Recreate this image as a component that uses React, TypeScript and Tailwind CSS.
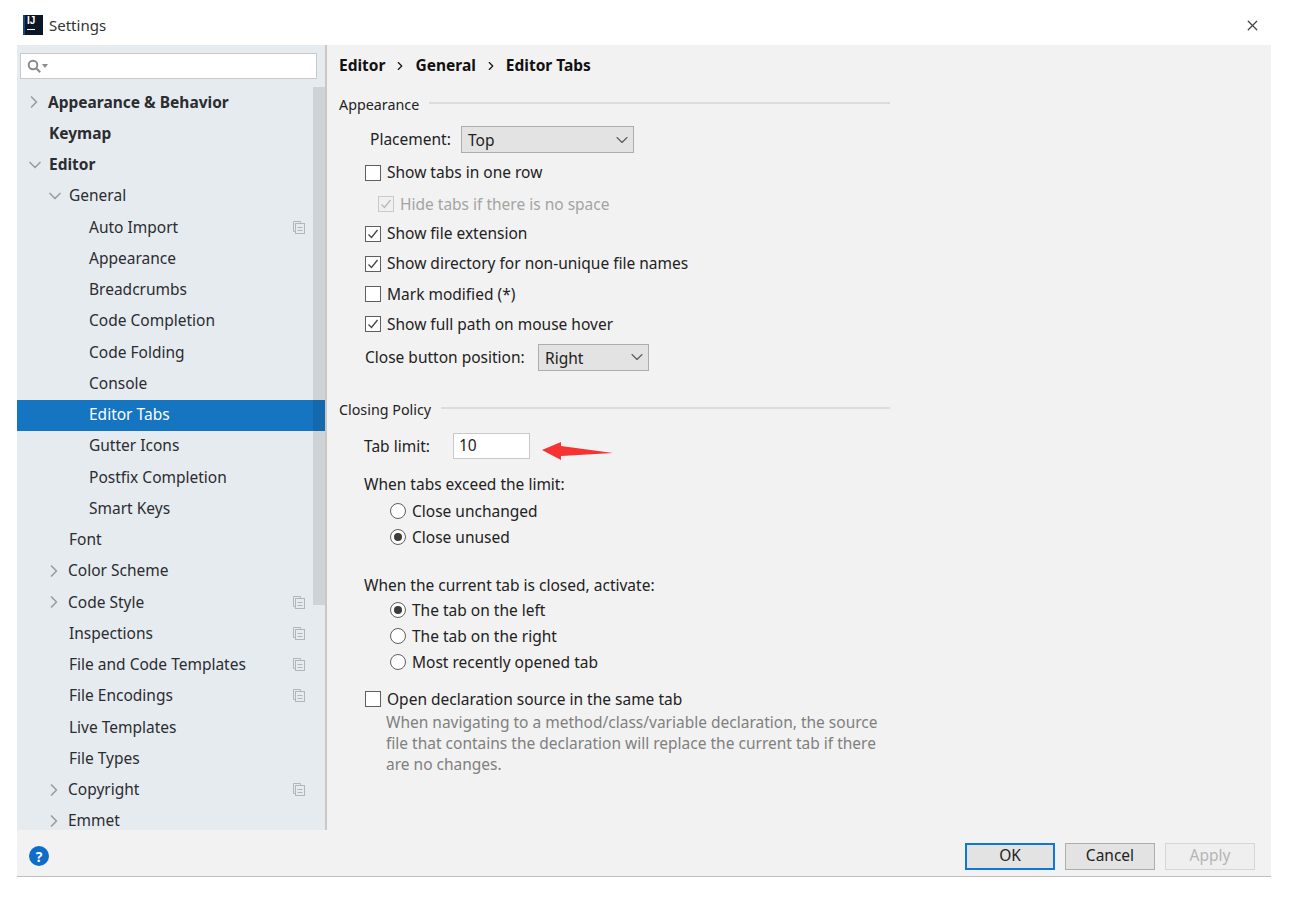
import { ChevronDown, ChevronRight, X } from 'lucide-react';

type TreeItem = {
  label: string;
  pad: string;
  bold?: boolean;
  arrow?: 'right' | 'down';
  shared?: boolean;
  selected?: boolean;
};

const treeItems: TreeItem[] = [
  { label: 'Appearance & Behavior', pad: 'pl-[10px]', bold: true, arrow: 'right' },
  { label: 'Keymap', pad: 'pl-[32px]', bold: true },
  { label: 'Editor', pad: 'pl-[11px]', bold: true, arrow: 'down' },
  { label: 'General', pad: 'pl-[31px]', arrow: 'down' },
  { label: 'Auto Import', pad: 'pl-[72px]', shared: true },
  { label: 'Appearance', pad: 'pl-[72px]' },
  { label: 'Breadcrumbs', pad: 'pl-[72px]' },
  { label: 'Code Completion', pad: 'pl-[72px]' },
  { label: 'Code Folding', pad: 'pl-[72px]' },
  { label: 'Console', pad: 'pl-[72px]' },
  { label: 'Editor Tabs', pad: 'pl-[72px]', selected: true },
  { label: 'Gutter Icons', pad: 'pl-[72px]' },
  { label: 'Postfix Completion', pad: 'pl-[72px]' },
  { label: 'Smart Keys', pad: 'pl-[72px]' },
  { label: 'Font', pad: 'pl-[52px]' },
  { label: 'Color Scheme', pad: 'pl-[30px]', arrow: 'right' },
  { label: 'Code Style', pad: 'pl-[30px]', arrow: 'right', shared: true },
  { label: 'Inspections', pad: 'pl-[52px]', shared: true },
  { label: 'File and Code Templates', pad: 'pl-[52px]', shared: true },
  { label: 'File Encodings', pad: 'pl-[52px]', shared: true },
  { label: 'Live Templates', pad: 'pl-[52px]' },
  { label: 'File Types', pad: 'pl-[52px]' },
  { label: 'Copyright', pad: 'pl-[30px]', arrow: 'right', shared: true },
  { label: 'Emmet', pad: 'pl-[30px]', arrow: 'right' },
];

const SharedIcon = () => (
  <svg width="12" height="13" viewBox="0 0 12 13" fill="none" stroke="#b0b6bc" strokeWidth="1">
    <path d="M2.5 10.5h-2v-10h7v2" />
    <rect x="2.5" y="2.5" width="9" height="10" />
    <path d="M4.5 6.5h5M4.5 9.5h5" />
  </svg>
);

const TreeRow = ({ item }: { item: TreeItem }) => (
  <div
    className={`flex items-center h-[31.25px] pb-[1px] pr-[20px] shrink-0 ${item.pad} ${
      item.selected ? 'bg-[#1675c0] text-white' : 'text-[#2b2d30]'
    } ${item.bold ? 'font-bold' : ''}`}
  >
    {item.arrow === 'right' && <ChevronRight className="w-[20px] h-[20px] -ml-[3.5px] mr-[4.5px] text-[#9a9da0]" strokeWidth={2} />}
    {item.arrow === 'down' && <ChevronDown className="w-[20px] h-[20px] -ml-[3.5px] mr-[4.5px] text-[#9a9da0]" strokeWidth={2} />}
    <span className="flex-1 whitespace-nowrap">{item.label}</span>
    {item.shared && <SharedIcon />}
  </div>
);

const Checkbox = ({ label, checked, disabled }: { label: string; checked?: boolean; disabled?: boolean }) => (
  <div className={`flex items-center gap-[6px] ${disabled ? 'text-[#a4a4a4]' : ''}`}>
    <span
      className={`w-[16px] h-[16px] border flex items-center justify-center shrink-0 ${
        disabled ? 'border-[#c9c9c9] bg-[#f0f0f0]' : 'border-[#5f5f5f] bg-white'
      }`}
    >
      {checked && (
        <svg width="12" height="12" viewBox="0 0 12 12" fill="none" stroke={disabled ? '#b8b8b8' : '#444444'} strokeWidth="1.3">
          <path d="M1.5 6.5l3 3 6-7.5" />
        </svg>
      )}
    </span>
    <span className="whitespace-nowrap">{label}</span>
  </div>
);

const Radio = ({ label, checked }: { label: string; checked?: boolean }) => (
  <div className="flex items-center gap-[6px] h-[26px]">
    <span className="w-[16px] h-[16px] rounded-full border border-[#5f5f5f] bg-white flex items-center justify-center shrink-0">
      {checked && <span className="w-[8px] h-[8px] rounded-full bg-[#3c3c3c]" />}
    </span>
    <span className="whitespace-nowrap">{label}</span>
  </div>
);

const Select = ({ value, width }: { value: string; width: string }) => (
  <div className={`flex items-center justify-between h-[27px] pl-[6px] pr-[1px] border border-[#adadad] bg-[#e3e3e3] ${width}`}>
    <span className="mt-[2px]">{value}</span>
    <ChevronDown className="w-[20px] h-[20px] text-[#5a5a5a]" strokeWidth={1.3} />
  </div>
);

const GroupTitle = ({ title }: { title: string }) => (
  <div className="flex items-center gap-[10px] w-[551px] h-[20px] text-[14.3px]">
    <span className="whitespace-nowrap mt-[1px]">{title}</span>
    <span className="flex-1 h-[2px] mb-[2px] bg-[#dcdcdc]" />
  </div>
);

const DialogButton = ({ label, kind }: { label: string; kind: 'default' | 'normal' | 'disabled' }) => {
  const styles = {
    default: 'border-2 border-[#0f78d4] bg-[#e3e3e3] text-[#222222]',
    normal: 'border border-[#adadad] bg-[#e3e3e3] text-[#222222]',
    disabled: 'border border-[#d6d6d6] bg-[#efefef] text-[#b5b5b5]',
  };
  return <div className={`w-[90px] h-[27px] flex items-center justify-center ${styles[kind]}`}>{label}</div>;
};

export default function App() {
  return (
    <div className="w-[1301px] h-[898px] bg-white flex flex-col font-['Noto_Sans',sans-serif] text-[15.5px] text-[#222222] overflow-hidden">
      {/* Title bar */}
      <div className="h-[45px] pt-[5px] shrink-0 flex items-center pl-[23px] pr-[40px]">
        <div className="w-[20px] h-[20px] bg-[#0b1626] border-l-2 border-[#15467e] flex flex-col px-[2px] pt-[1px] text-white">
          <span className="text-[10px] leading-[10px] font-bold font-['Liberation_Sans',sans-serif]">IJ</span>
          <span className="w-[8px] h-[1px] mt-[3px] bg-white" />
        </div>
        <span className="ml-[6px] mt-[1px] text-[15px] text-[#333333]">Settings</span>
        <X className="ml-auto w-[17px] h-[17px] text-[#444444]" strokeWidth={1.8} />
      </div>

      {/* Dialog body */}
      <div className="w-[1254px] ml-[17px] h-[832px] shrink-0 flex flex-col bg-[#f2f2f2] border-b border-[#bdbdbd]">
        <div className="flex flex-1 min-h-0">
          {/* Sidebar */}
          <div className="w-[308px] shrink-0 bg-[#e6ebf0] flex flex-col">
            <div className="h-[42px] shrink-0 flex items-start pt-[8px] pl-[3px] pr-[8px]">
              <div className="w-full h-[26px] bg-white border border-[#c9c9c9] flex items-center pl-[6px] gap-[1px]">
                <svg width="14" height="14" viewBox="0 0 14 14" fill="none" stroke="#8a8a8a" strokeWidth="2">
                  <circle cx="6" cy="6" r="4.3" />
                  <path d="M9.2 9.2l4 4" />
                </svg>
                <svg width="6" height="4" viewBox="0 0 6 4" fill="#8a8a8a">
                  <path d="M0 0h6l-3 4z" />
                </svg>
              </div>
            </div>
            <div className="relative flex-1 min-h-0 flex flex-col overflow-hidden">
              {treeItems.map((item) => (
                <TreeRow key={item.label} item={item} />
              ))}
              {/* scrollbar thumb sits over the tree, the selected row shows through it */}
              <div className="absolute right-0 top-0 w-[12px] h-[518px] bg-black/10" />
            </div>
          </div>
          <div className="w-[2px] shrink-0 bg-[#c8c8c8]" />

          {/* Editor Tabs page */}
          <div className="flex-1 min-w-0 pl-[12px] flex flex-col">
            <div className="flex items-center gap-[8px] h-[20px] mt-[11px] font-bold text-[#111111]">
              <span>Editor</span>
              <ChevronRight className="w-[14px] h-[14px]" strokeWidth={2} />
              <span>General</span>
              <ChevronRight className="w-[14px] h-[14px]" strokeWidth={2} />
              <span>Editor Tabs</span>
            </div>

            <div className="mt-[18px]">
              <GroupTitle title="Appearance" />
            </div>
            <div className="pl-[26px] flex flex-col">
              <div className="flex items-center mt-[12px] pl-[5px]">
                <span className="w-[91px] whitespace-nowrap mt-[1px]">Placement:</span>
                <Select value="Top" width="w-[173px]" />
              </div>
              <div className="mt-[9.5px] flex flex-col gap-[9.3px] [&>div]:h-[21px]">
                <Checkbox label="Show tabs in one row" />
                <div className="pl-[13px]">
                  <Checkbox label="Hide tabs if there is no space" checked disabled />
                </div>
                <Checkbox label="Show file extension" checked />
                <Checkbox label="Show directory for non-unique file names" checked />
                <Checkbox label="Mark modified (*)" />
                <Checkbox label="Show full path on mouse hover" checked />
              </div>
              <div className="flex items-center mt-[9px]">
                <span className="w-[173px] whitespace-nowrap mt-[1px]">Close button position:</span>
                <Select value="Right" width="w-[111px]" />
              </div>
            </div>

            <div className="mt-[28px]">
              <GroupTitle title="Closing Policy" />
            </div>
            <div className="pl-[25px] flex flex-col">
              <div className="flex items-center mt-[14.5px]">
                <span className="w-[89px]">Tab limit:</span>
                <div className="w-[77px] h-[26px] bg-white border border-[#c9c9c9] pl-[5px] pb-[2px] flex items-center">10</div>
                <svg className="ml-[11px] self-start mt-[7px] overflow-visible" width="72" height="19" viewBox="0 0 72 19" fill="#f53333">
                  <path d="M1 10L20 2l0 4 52 7-52 3 0 4z" />
                </svg>
              </div>
              <div className="mt-[14px] h-[22px] flex items-center">When tabs exceed the limit:</div>
              <div className="pl-[26px] mt-[3px]">
                <Radio label="Close unchanged" />
                <Radio label="Close unused" checked />
              </div>
              <div className="mt-[24px] h-[22px] flex items-center">When the current tab is closed, activate:</div>
              <div className="pl-[26px] mt-[1px]">
                <Radio label="The tab on the left" checked />
                <Radio label="The tab on the right" />
                <Radio label="Most recently opened tab" />
              </div>
              <div className="mt-[13px] h-[22px] pl-[1px] flex items-center">
                <Checkbox label="Open declaration source in the same tab" checked={false} />
              </div>
              <div className="pl-[22px] w-[522px] text-[#808080] leading-[21px] mt-[2px]">
                When navigating to a method/class/variable declaration, the source file that contains the declaration will replace the current tab if there are no changes.
              </div>
            </div>
          </div>
        </div>

        {/* Footer */}
        <div className="h-[46px] pt-[6px] shrink-0 flex items-center pl-[12px] pr-[16px]">
          <div className="w-[20px] h-[20px] rounded-full bg-[#0f6cc8] text-white flex items-center justify-center font-bold text-[14px]">?</div>
          <div className="ml-auto flex gap-[10px]">
            <DialogButton label="OK" kind="default" />
            <DialogButton label="Cancel" kind="normal" />
            <DialogButton label="Apply" kind="disabled" />
          </div>
        </div>
      </div>
    </div>
  );
}
